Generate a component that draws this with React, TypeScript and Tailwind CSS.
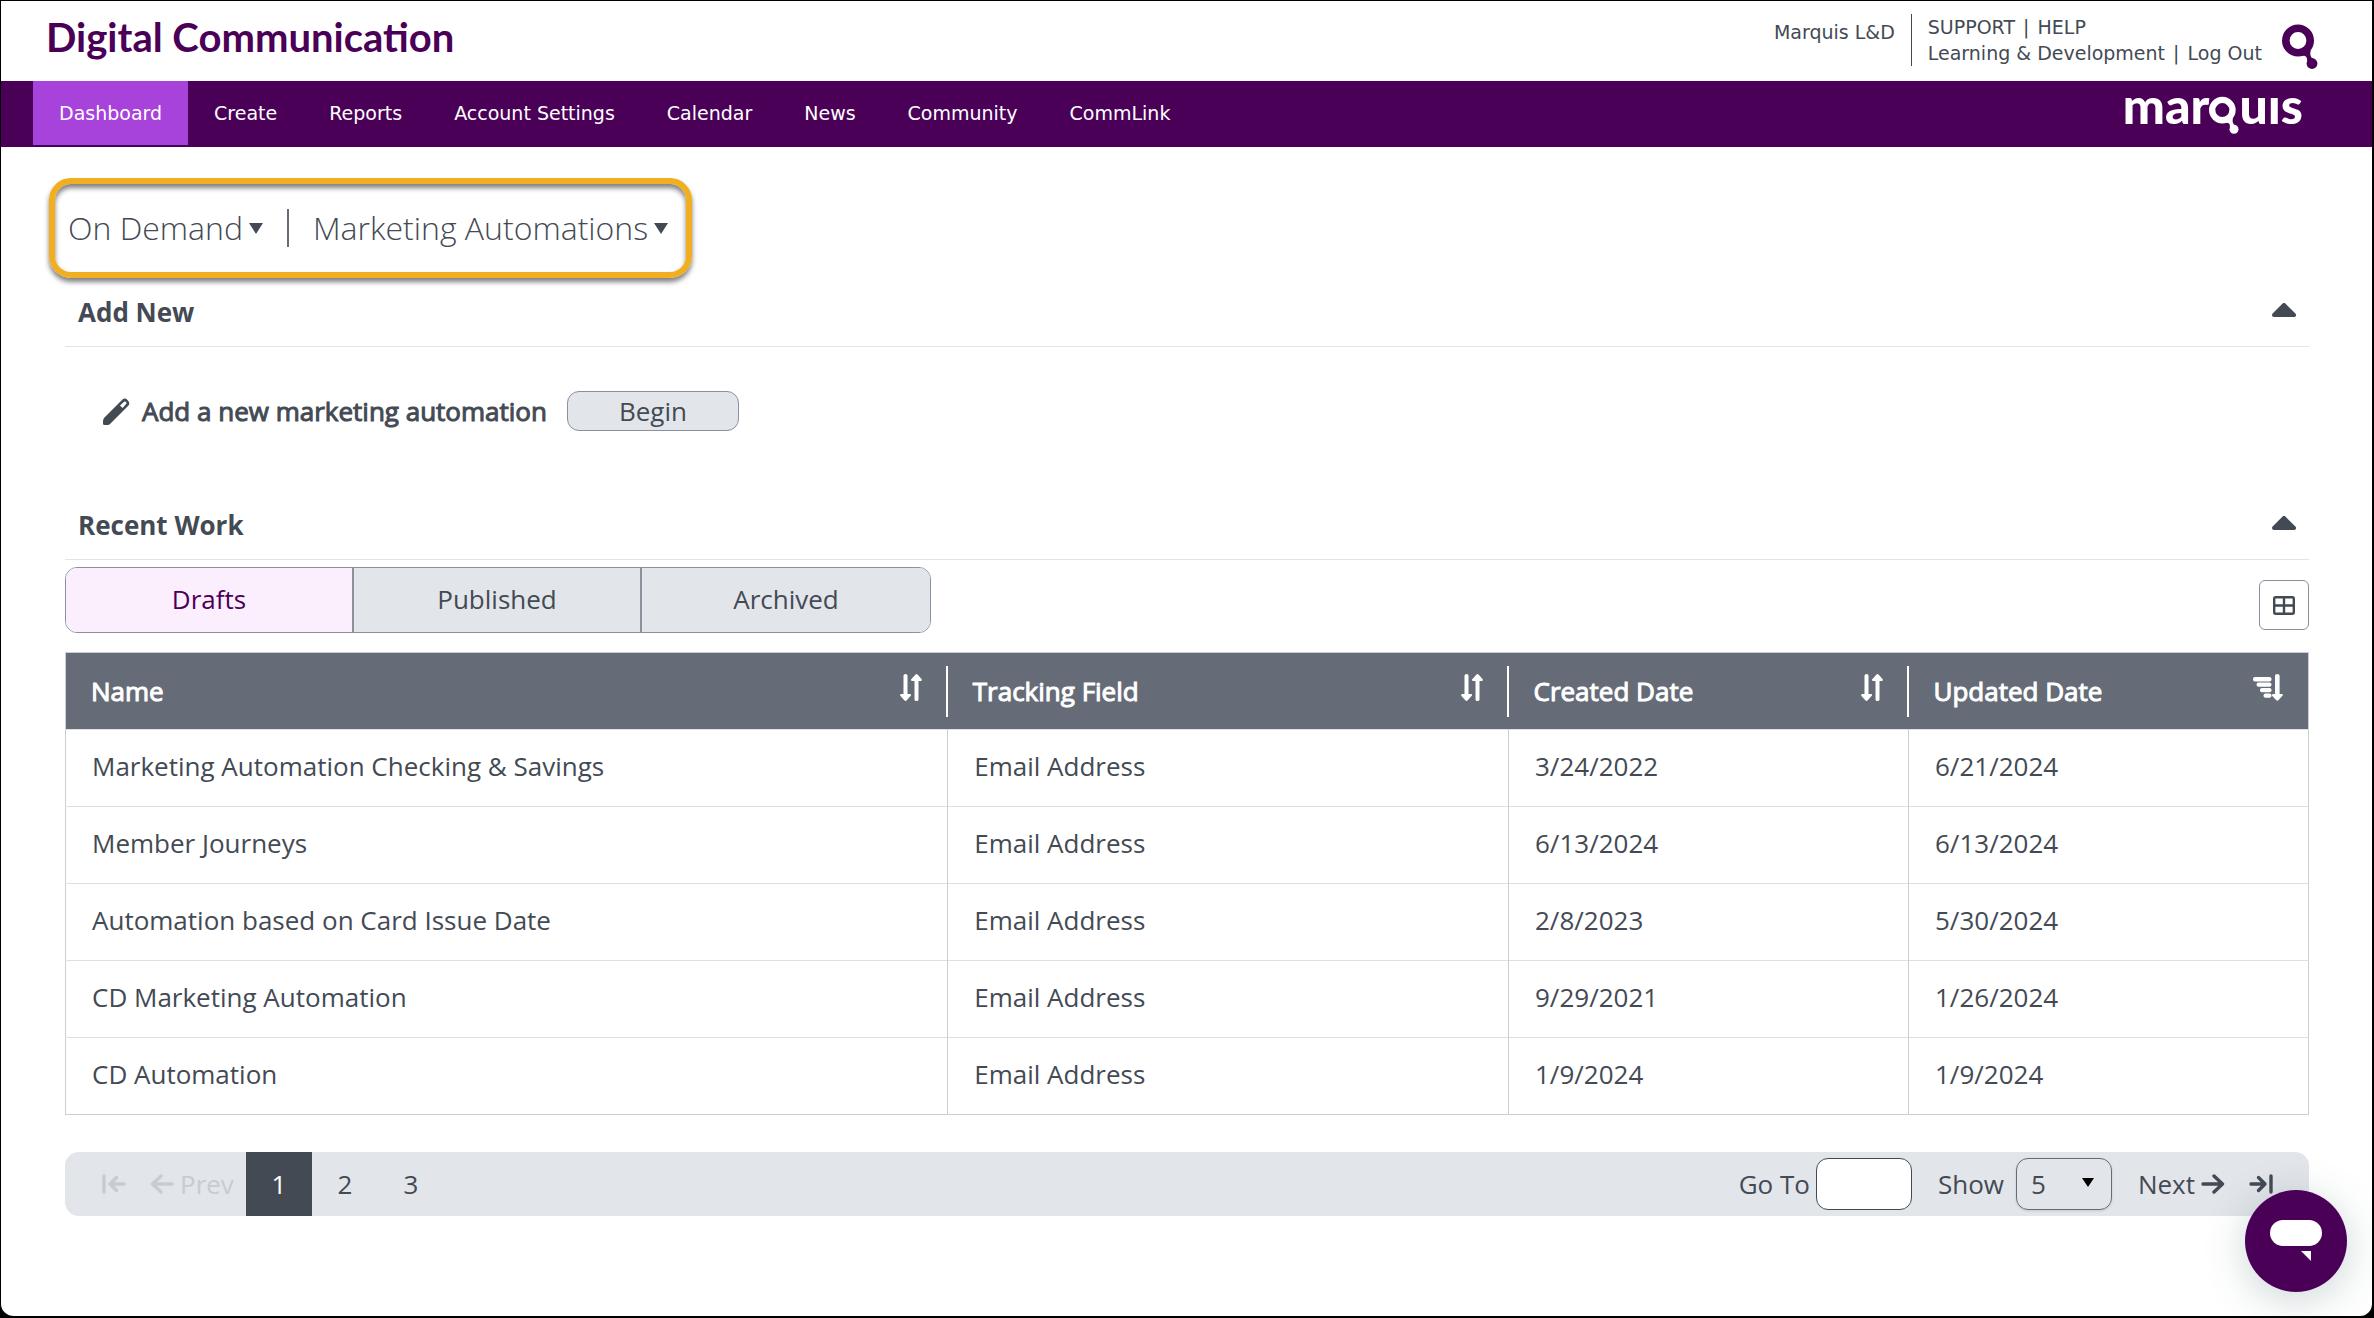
import { useState } from "react";

type Row = {
  name: string;
  tracking: string;
  created: string;
  updated: string;
};

const navItems = [
  "Dashboard",
  "Create",
  "Reports",
  "Account Settings",
  "Calendar",
  "News",
  "Community",
  "CommLink",
];

const tabs = ["Drafts", "Published", "Archived"];

const rows: Row[] = [
  {
    name: "Marketing Automation Checking & Savings",
    tracking: "Email Address",
    created: "3/24/2022",
    updated: "6/21/2024",
  },
  {
    name: "Member Journeys",
    tracking: "Email Address",
    created: "6/13/2024",
    updated: "6/13/2024",
  },
  {
    name: "Automation based on Card Issue Date",
    tracking: "Email Address",
    created: "2/8/2023",
    updated: "5/30/2024",
  },
  {
    name: "CD Marketing Automation",
    tracking: "Email Address",
    created: "9/29/2021",
    updated: "1/26/2024",
  },
  {
    name: "CD Automation",
    tracking: "Email Address",
    created: "1/9/2024",
    updated: "1/9/2024",
  },
];

const columns = [
  { label: "Name", width: "" },
  { label: "Tracking Field", width: "w-1/4" },
  { label: "Created Date", width: "w-[400px]" },
  { label: "Updated Date", width: "w-[400px]" },
];

// Ring with a droplet tail
function QMark({ className }: { className: string }) {
  return (
    <svg viewBox="0 0 36 46" className={className} aria-hidden="true">
      <circle cx="16" cy="16.5" r="12.2" fill="none" stroke="currentColor" strokeWidth="7.600" />
      <path
        d="M18 32 C24 31 25.500 33 25 37 L31 35 C28.500 33 27.500 30 29 26 Z"
        fill="currentColor"
      />
      <circle cx="30" cy="39.500" r="5.400" fill="currentColor" />
    </svg>
  );
}

function MarquisLogo() {
  return (
    <div
      role="img"
      aria-label="marquis"
      className="flex items-start font-['Lato'] text-[50px] leading-[48px] font-black text-white"
    >
      <span>mar</span>
      <QMark className="mt-[15px] h-[39px] w-[30px]" />
      <span>uıs</span>
    </div>
  );
}

function Caret() {
  return (
    <svg viewBox="0 0 14 11" className="h-[11px] w-[14px]" aria-hidden="true">
      <path d="M0 0H14L7 11Z" fill="currentColor" />
    </svg>
  );
}

function CollapseIcon() {
  return (
    <svg viewBox="0 0 24 14" className="h-3.5 w-6" aria-hidden="true">
      <path d="M2 12 L12 2 L22 12Z" fill="currentColor" stroke="currentColor" strokeWidth="4" strokeLinejoin="round" />
    </svg>
  );
}

function PencilIcon() {
  return (
    <svg viewBox="0 0 27 27" className="h-[27px] w-[27px]" aria-hidden="true">
      <path
        d="M1 20 L19.500 1.500 Q22 -.5 24.500 2 Q27.500 5 25.500 7.500 L7 26 Q5 27.500 1.500 27 Q0 27 0 25.500 Q-.3 22 1 20Z"
        fill="currentColor"
      />
      <path d="M17 7.500 L21 3.800 Q22 3 23 4 Q24 5 23.200 6 L19.500 10Z" fill="white" />
    </svg>
  );
}

function SortIcon() {
  return (
    <svg viewBox="0 0 22 27" className="h-[27px] w-[22px]" fill="currentColor" aria-hidden="true">
      <path d="M3.500 1.500Q3.500 0 5.500 0Q7.500 0 7.500 1.500V20H10Q12 20.500 10.500 22L6.500 26.500Q5.500 27.300 4.500 26.500L.5 22Q-.5 20.500 1 20H3.500Z" />
      <path d="M14.500 25.500Q14.500 27 16.500 27Q18.500 27 18.500 25.500V7H21Q22.500 6.500 21.500 5L17.500 .5Q16.500 -.3 15.500 .5L11.500 5Q10 6.500 12 7H14.500Z" />
    </svg>
  );
}

function SortDescIcon() {
  return (
    <svg viewBox="0 0 30 27" className="h-[27px] w-[30px]" fill="currentColor" aria-hidden="true">
      <rect x="0" y="3" width="18.500" height="4.600" rx="2" />
      <rect x="3.500" y="8.600" width="15" height="4.200" rx="2" />
      <rect x="7" y="14" width="11.500" height="4.200" rx="2" />
      <rect x="10.500" y="19.500" width="8" height="4.200" rx="2" />
      <path d="M22 1.500Q22 0 24.300 0Q26.600 0 26.600 1.500V20H29Q30.500 20.500 29.300 22L25.300 26.300Q24.300 27.200 23.300 26.300L19.300 22Q18.300 20.500 20 20H22Z" />
    </svg>
  );
}

function GridIcon() {
  return (
    <svg viewBox="0 0 22 19" className="h-[19px] w-[22px]" fill="none" stroke="currentColor" strokeWidth="2.400" aria-hidden="true">
      <rect x="1.200" y="1.200" width="19.600" height="16.600" rx="1.500" />
      <path d="M11 1V18M1 9.500H21" />
    </svg>
  );
}

function ArrowIcon({ className }: { className: string }) {
  return (
    <svg viewBox="0 0 24 20" className={className} fill="none" stroke="currentColor" strokeWidth="3.400" strokeLinecap="round" strokeLinejoin="round" aria-hidden="true">
      <path d="M2 10H21M13 2L21.500 10L13 18" />
    </svg>
  );
}

function LastIcon({ className }: { className: string }) {
  return (
    <svg viewBox="0 0 24 20" className={className} fill="none" stroke="currentColor" strokeWidth="3.400" strokeLinecap="round" strokeLinejoin="round" aria-hidden="true">
      <path d="M2 10H15M9.500 3.500L16 10L9.500 16.500M22 2V18" />
    </svg>
  );
}

function SectionHeader({ title }: { title: string }) {
  return (
    <div className="flex items-center justify-between border-b border-[#e2e4e9] pr-[13px] pl-[13px]">
      <h2 className="py-4 text-[26px] leading-9 font-bold">{title}</h2>
      <button type="button" aria-label={`Collapse ${title}`} className="pb-1">
        <CollapseIcon />
      </button>
    </div>
  );
}

export default function App() {
  const [activeTab, setActiveTab] = useState("Drafts");
  const [page, setPage] = useState(1);

  return (
    <div className="bg-black">
      <div className="flex min-h-screen flex-col overflow-hidden rounded-b-[14px] border-t border-r-2 border-b-2 border-l border-black bg-white font-['Open_Sans',sans-serif] text-[#434a54]">
        <header>
          <div className="flex h-20 justify-between pr-[54px] pl-[45px] font-['DejaVu_Sans',sans-serif] text-[19px]">
            <h1 className="pt-3 font-['Lato',sans-serif] text-[40px] leading-[48px] font-bold text-[#4b0058]">
              Digital Communication
            </h1>
            <div className="flex items-start">
              <span className="pt-[18px] leading-[26px]">Marquis L&amp;D</span>
              <div className="mt-[13px] ml-4 border-l border-[#434a54] pl-4 leading-[26px]">
                <div>
                  <a href="#support">SUPPORT</a> <span className="mx-0.5">|</span> <a href="#help">HELP</a>
                </div>
                <div>
                  <a href="#learning">Learning &amp; Development</a> <span className="mx-0.5">|</span>{" "}
                  <a href="#logout">Log Out</a>
                </div>
              </div>
              <QMark className="mt-[23px] ml-5 h-[46px] w-9 text-[#4b0058]" />
            </div>
          </div>

          <nav className="flex h-[66px] items-start justify-between bg-[#4b0058] pr-[69px] pl-8">
            <ul className="flex font-['DejaVu_Sans',sans-serif] text-[19px] text-white">
              {navItems.map((item) => (
                <li key={item}>
                  <a
                    href="#nav"
                    className={
                      item === "Dashboard"
                        ? "block bg-[#a742da] px-[26px] leading-[64px]"
                        : "block px-[26px] leading-[64px]"
                    }
                  >
                    {item}
                  </a>
                </li>
              ))}
            </ul>
            <MarquisLogo />
          </nav>
        </header>

        <main className="pt-[31px] pr-[63px] pl-16">
          <div className="-ml-4 flex w-fit items-center rounded-[22px] border-[6px] border-[#f0ae20] py-1 pr-[18px] pl-[13px] text-[32px] leading-[80px] font-light shadow-[0_4px_5px_rgba(0,0,0,0.5),inset_0_4px_5px_rgba(0,0,0,0.5)]">
            <button type="button" className="flex items-center gap-1.5">
              On Demand
              <Caret />
            </button>
            <span className="mx-6 h-[38px] border-l-2 border-[#666c77]" />
            <button type="button" className="flex items-center gap-1.5">
              Marketing Automations
              <Caret />
            </button>
          </div>

          <section>
            <SectionHeader title="Add New" />
            <div className="flex items-center pt-11 pb-[60px] pl-[38px] text-[26px]">
              <PencilIcon />
              <span className="ml-3 [-webkit-text-stroke:1px]">Add a new marketing automation</span>
              <button
                type="button"
                className="ml-5 h-10 w-[172px] rounded-xl border border-[#8b919c] bg-[#e2e5ea] leading-9"
              >
                Begin
              </button>
            </div>
          </section>

          <section>
            <SectionHeader title="Recent Work" />
            <div className="mt-[7px] flex items-center justify-between text-[26px]">
              <div className="flex h-[66px] divide-x-2 divide-[#8b919c] overflow-hidden rounded-xl border border-[#8b919c]">
                {tabs.map((tab) => (
                  <button
                    key={tab}
                    type="button"
                    onClick={() => setActiveTab(tab)}
                    className={
                      tab === activeTab
                        ? "w-72 bg-[#fbeffe] pb-0.5 text-[#4b0058]"
                        : "w-72 bg-[#e2e5ea] pb-0.5"
                    }
                  >
                    {tab}
                  </button>
                ))}
              </div>
              <button
                type="button"
                aria-label="Choose columns"
                className="mt-2.5 flex h-[50px] w-[50px] items-center justify-center rounded-md border border-[#8b919c]"
              >
                <GridIcon />
              </button>
            </div>

            <table className="mt-[19px] w-full table-fixed border-collapse border border-[#cbced6] text-left text-[26px]">
              <thead>
                <tr className="h-[77px] bg-[#666c77] text-white">
                  {columns.map((col, i) => (
                    <th key={col.label} className={`${col.width} p-0 font-normal`}>
                      <button
                        type="button"
                        className={
                          i < 3
                            ? "flex h-[51px] w-full items-center justify-between border-r-2 border-white pr-6 pl-[25px]"
                            : "flex h-[51px] w-full items-center justify-between pr-[25px] pl-[25px]"
                        }
                      >
                        <span className="[-webkit-text-stroke:1px]">{col.label}</span>
                        <span className="pb-2">{i < 3 ? <SortIcon /> : <SortDescIcon />}</span>
                      </button>
                    </th>
                  ))}
                </tr>
              </thead>
              <tbody>
                {rows.map((row) => (
                  <tr key={row.name} className="h-[77px] border-t border-[#dcdfe3]">
                    <td className="border-r border-[#cbced6] pb-1 pl-[26px]">{row.name}</td>
                    <td className="border-r border-[#cbced6] pb-1 pl-[26px]">{row.tracking}</td>
                    <td className="border-r border-[#cbced6] pb-1 pl-[26px]">{row.created}</td>
                    <td className="pb-1 pl-[26px]">{row.updated}</td>
                  </tr>
                ))}
              </tbody>
            </table>
          </section>

          <div className="mt-[37px] mb-[100px] flex h-16 items-center justify-between overflow-hidden rounded-[14px] bg-[#e2e5ea] pr-9 text-[26px]">
            <div className="flex h-full items-center">
              <button type="button" disabled aria-label="First page" className="pl-[37px] text-[#c8cbd0]">
                <LastIcon className="h-5 w-6 rotate-180" />
              </button>
              <button type="button" disabled className="flex items-center gap-1.5 pr-3 pl-6 text-[#c8cbd0]">
                <ArrowIcon className="h-5 w-6 rotate-180" />
                Prev
              </button>
              {[1, 2, 3].map((n) => (
                <button
                  key={n}
                  type="button"
                  onClick={() => setPage(n)}
                  className={n === page ? "h-full w-[66px] bg-[#434a54] text-white" : "h-full w-[66px]"}
                >
                  {n}
                </button>
              ))}
            </div>
            <div className="flex items-center">
              <label htmlFor="goto">Go To</label>
              <input
                id="goto"
                type="text"
                className="ml-1.5 h-[52px] w-24 rounded-xl border border-[#434a54] bg-white px-3"
              />
              <label htmlFor="show" className="ml-[26px]">
                Show
              </label>
              <div className="relative ml-3">
                <select
                  id="show"
                  defaultValue="5"
                  className="block h-[52px] w-24 appearance-none rounded-xl border border-[#666c77] pl-3.5 shadow-sm"
                >
                  <option>5</option>
                  <option>10</option>
                  <option>25</option>
                </select>
                <span className="pointer-events-none absolute top-5 right-[18px] text-black">
                  <svg viewBox="0 0 12 9" className="h-[9px] w-3" aria-hidden="true">
                    <path d="M0 0H12L6 9Z" fill="currentColor" />
                  </svg>
                </span>
              </div>
              <button type="button" className="ml-[26px] flex items-center gap-1.5">
                Next
                <ArrowIcon className="h-5 w-6" />
              </button>
              <button type="button" aria-label="Last page" className="ml-6">
                <LastIcon className="h-5 w-6" />
              </button>
            </div>
          </div>
        </main>
      </div>

      <button
        type="button"
        aria-label="Open chat"
        className="fixed right-[27px] bottom-[26px] flex h-[102px] w-[102px] items-center justify-center rounded-full bg-[#4b0058] text-white shadow-[0_8px_40px_rgba(60,90,90,0.25)]"
      >
        <svg viewBox="0 0 52 42" className="h-[42px] w-[52px]" fill="currentColor" aria-hidden="true">
          <rect x="0" y="0" width="52" height="26" rx="13" />
          <path d="M31 31H41V41Z" />
        </svg>
      </button>
    </div>
  );
}
